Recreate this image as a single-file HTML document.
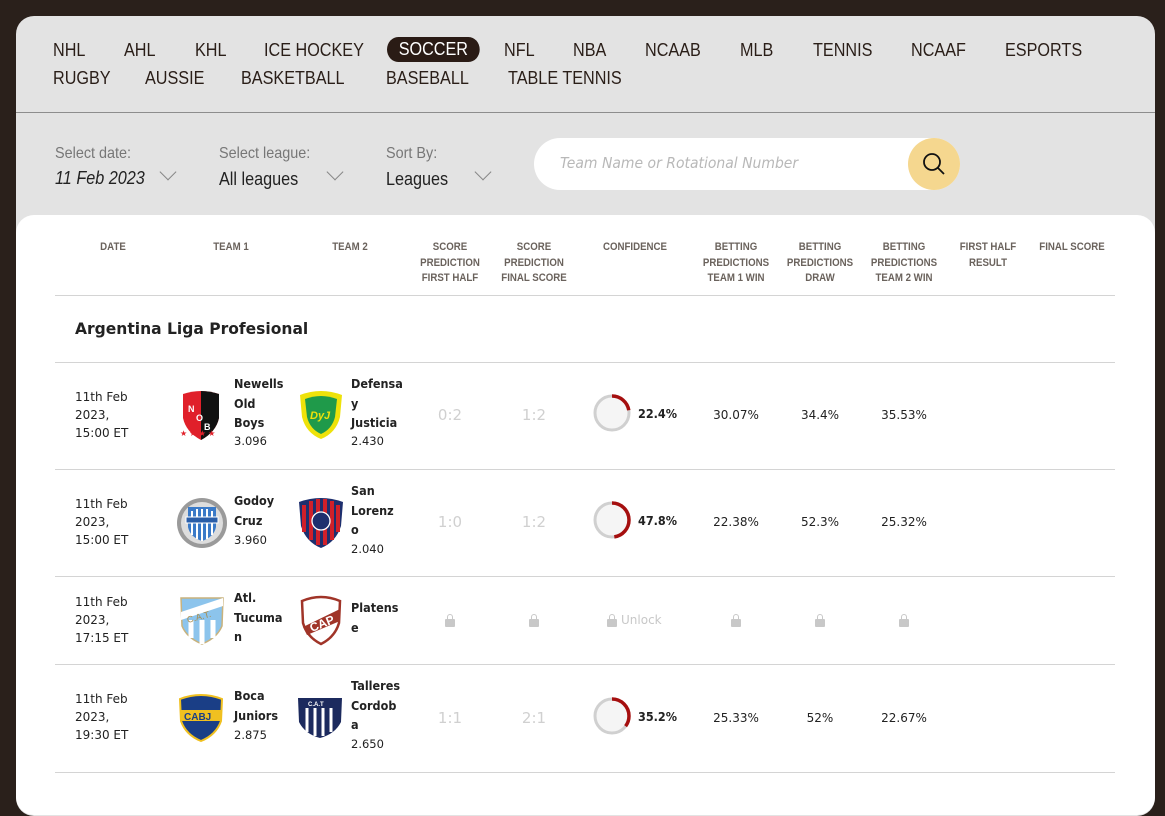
<!DOCTYPE html>
<html><head><meta charset="utf-8"><style>
*{margin:0;padding:0;box-sizing:border-box}
body{width:1165px;height:777px;overflow:hidden;background:#2a201b;font-family:"Liberation Sans",sans-serif;position:relative}
.panel{position:absolute;left:16px;top:16px;width:1139px;height:800px;background:#e3e3e3;border-radius:18px}
.nav{position:absolute;font-size:18px;color:#2a1e18;font-family:"Liberation Sans",sans-serif}
.nav span{position:absolute;white-space:nowrap;top:0;transform:scaleX(0.9);transform-origin:left center}
.sel{background:#2a1b15;color:#fff;border-radius:14px;padding:2px 13px}
.hr{position:absolute;left:16px;top:112px;width:1139px;height:1px;background:#8d8d8d}
.lbl{position:absolute;font-size:16px;color:#777;transform:scaleX(0.9);transform-origin:left}
.val{position:absolute;font-size:18px;color:#222;transform:scaleX(0.9);transform-origin:left}
.chev{position:absolute;width:12px;height:12px;border-right:1.3px solid #888;border-bottom:1.3px solid #888;transform:rotate(45deg)}
.search{position:absolute;left:534px;top:138px;width:426px;height:52px;background:#fff;border-radius:26px}
.search i{position:absolute;left:26px;top:16px;font-size:15px;color:#b8b8b8;font-family:"DejaVu Sans",sans-serif;font-style:italic;transform:scaleX(0.93);transform-origin:left}
.sbtn{position:absolute;left:908px;top:138px;width:52px;height:52px;border-radius:50%;background:#f5d78f}
.card{position:absolute;left:16px;top:215px;width:1139px;height:600px;background:#fff;border-radius:18px}
.th{position:absolute;top:240px;font-size:11px;font-weight:bold;color:#6a625c;text-align:center;line-height:15.5px;transform:translateX(-50%) scaleX(0.88);white-space:nowrap}
.line{position:absolute;left:55px;width:1060px;height:1px;background:#d4d4d4}
.lg{position:absolute;left:75px;top:319px;font-size:16px;font-weight:bold;color:#222;font-family:"DejaVu Sans",sans-serif;transform:scaleX(0.97);transform-origin:left}
.t{position:absolute;font-family:"DejaVu Sans",sans-serif;font-size:12px;color:#222}
.d{line-height:18px}
.n{font-weight:bold;line-height:19.5px;font-size:12.5px;transform:scaleX(0.9);transform-origin:left top}
.o{font-size:11.5px}
.sc{position:absolute;font-family:"DejaVu Sans",sans-serif;font-size:15px;color:#d0d0d0;transform:translateX(-50%)}
.p{position:absolute;font-family:"DejaVu Sans",sans-serif;font-size:12px;color:#222;transform:translateX(-50%)}
.cp{position:absolute;font-family:"DejaVu Sans",sans-serif;font-size:12.5px;font-weight:bold;color:#222;transform:scaleX(0.9);transform-origin:left}
svg{position:absolute}
.lock{position:absolute;width:10px;height:8px;background:#c8c8c8;border-radius:1px}
.lock:before{content:"";position:absolute;left:2px;top:-5px;width:4px;height:5px;border:1.5px solid #c8c8c8;border-bottom:none;border-radius:4px 4px 0 0}
</style></head><body>
<div class="panel"></div>
<div class="nav" style="left:0;top:40px">
<span style="left:53px">NHL</span><span style="left:124px">AHL</span><span style="left:195px">KHL</span><span style="left:264px">ICE HOCKEY</span><span class="sel" style="left:387px;top:-3px">SOCCER</span><span style="left:504px">NFL</span><span style="left:573px">NBA</span><span style="left:645px">NCAAB</span><span style="left:740px">MLB</span><span style="left:813px">TENNIS</span><span style="left:911px">NCAAF</span><span style="left:1005px">ESPORTS</span>
</div>
<div class="nav" style="left:0;top:68px">
<span style="left:53px">RUGBY</span><span style="left:145px">AUSSIE</span><span style="left:241px">BASKETBALL</span><span style="left:386px">BASEBALL</span><span style="left:508px">TABLE TENNIS</span>
</div>
<div class="hr"></div>
<div class="lbl" style="left:55px;top:145px">Select date:</div>
<div class="val" style="left:55px;top:168px;font-style:italic">11 Feb 2023</div>
<div class="chev" style="left:162px;top:166px"></div>
<div class="lbl" style="left:219px;top:145px">Select league:</div>
<div class="val" style="left:219px;top:169px">All leagues</div>
<div class="chev" style="left:329px;top:166px"></div>
<div class="lbl" style="left:386px;top:145px">Sort By:</div>
<div class="val" style="left:386px;top:169px">Leagues</div>
<div class="chev" style="left:477px;top:166px"></div>
<div class="search"><i>Team Name or Rotational Number</i></div>
<div class="sbtn"><svg width="52" height="52" style="left:0;top:0"><circle cx="24" cy="24" r="8" fill="none" stroke="#111" stroke-width="1.8"/><line x1="30" y1="30" x2="36" y2="36" stroke="#111" stroke-width="1.8"/></svg></div>
<div class="card"></div>
<div class="th" style="left:113px">DATE</div>
<div class="th" style="left:231px">TEAM 1</div>
<div class="th" style="left:350px">TEAM 2</div>
<div class="th" style="left:450px">SCORE<br>PREDICTION<br>FIRST HALF</div>
<div class="th" style="left:534px">SCORE<br>PREDICTION<br>FINAL SCORE</div>
<div class="th" style="left:635px">CONFIDENCE</div>
<div class="th" style="left:736px">BETTING<br>PREDICTIONS<br>TEAM 1 WIN</div>
<div class="th" style="left:820px">BETTING<br>PREDICTIONS<br>DRAW</div>
<div class="th" style="left:904px">BETTING<br>PREDICTIONS<br>TEAM 2 WIN</div>
<div class="th" style="left:988px">FIRST HALF<br>RESULT</div>
<div class="th" style="left:1072px">FINAL SCORE</div>
<div class="line" style="top:295px"></div>
<div class="lg">Argentina Liga Profesional</div>
<div class="line" style="top:362px"></div>
<div class="line" style="top:469px"></div>
<div class="line" style="top:576px"></div>
<div class="line" style="top:664px"></div>
<div class="line" style="top:772px"></div>

<!-- Row 1 -->
<div class="t d" style="left:75px;top:388px">11th Feb<br>2023,<br>15:00 ET</div>
<svg width="46" height="56" style="left:178px;top:390px"><path d="M5 4 Q23 -2 41 4 L41 28 Q38 42 23 50 Q8 42 5 28Z" fill="#e0202a"/><path d="M23 1 Q32 1 41 4 L41 28 Q38 42 23 50Z" fill="#111"/><text x="10" y="22" font-size="9" fill="#fff" font-weight="bold">N</text><text x="18" y="31" font-size="9" fill="#fff" font-weight="bold">O</text><text x="26" y="40" font-size="9" fill="#fff" font-weight="bold">B</text><text x="2" y="46" font-size="8" fill="#e0202a">★ ★ ★ ★</text></svg>
<div class="t n" style="left:234px;top:374px">Newells<br>Old<br>Boys</div>
<div class="t o" style="left:234px;top:434px">3.096</div>
<svg width="50" height="52" style="left:296px;top:389px"><path d="M4 6 Q25 -2 46 6 L44 28 Q40 44 25 50 Q10 44 6 28Z" fill="#eee20a"/><path d="M9 10 Q25 4 41 10 L39 28 Q36 40 25 45 Q14 40 11 28Z" fill="#1f9a4a"/><text x="14" y="30" font-size="11" fill="#eee20a" font-weight="bold" font-style="italic">DyJ</text></svg>
<div class="t n" style="left:351px;top:374px">Defensa<br>y<br>Justicia</div>
<div class="t o" style="left:351px;top:434px">2.430</div>
<div class="sc" style="left:450px;top:406px">0:2</div>
<div class="sc" style="left:534px;top:406px">1:2</div>
<svg width="40" height="40" style="left:593px;top:394px"><circle cx="19" cy="19" r="17" fill="#f5f5f5" stroke="#d0d0d0" stroke-width="3"/><circle cx="19" cy="19" r="17" fill="none" stroke="#a50f0f" stroke-width="3.5" stroke-dasharray="23.9 200" transform="rotate(-90 19 19)"/></svg>
<div class="cp" style="left:638px;top:406px">22.4%</div>
<div class="p" style="left:736px;top:408px">30.07%</div>
<div class="p" style="left:820px;top:408px">34.4%</div>
<div class="p" style="left:904px;top:408px">35.53%</div>

<!-- Row 2 -->
<div class="t d" style="left:75px;top:495px">11th Feb<br>2023,<br>15:00 ET</div>
<svg width="52" height="52" style="left:176px;top:497px"><circle cx="26" cy="26" r="25" fill="#9a9a9a"/><circle cx="26" cy="26" r="21" fill="#ddd"/><path d="M12 10 L40 10 L40 30 Q38 40 26 44 Q14 40 12 30Z" fill="#3a7ac8"/><path d="M16 14 V38 M21 12 V42 M26 12 V44 M31 12 V42 M36 14 V38" stroke="#fff" stroke-width="2"/><rect x="10" y="20" width="32" height="6" fill="#2a5ea8" stroke="#fff"/></svg>
<div class="t n" style="left:234px;top:491px">Godoy<br>Cruz</div>
<div class="t o" style="left:234px;top:533px">3.960</div>
<svg width="50" height="54" style="left:296px;top:496px"><path d="M3 6 Q25 -2 47 6 L45 30 Q40 46 25 52 Q10 46 5 30Z" fill="#1e2f6e"/><path d="M8 9 V36 M15 5 V44 M22 3 V49 M29 3 V49 M36 5 V44 M42 9 V36" stroke="#d0202a" stroke-width="4"/><circle cx="25" cy="25" r="9" fill="#1e2f6e" stroke="#fff" stroke-width="1.3"/></svg>
<div class="t n" style="left:351px;top:481px">San<br>Lorenz<br>o</div>
<div class="t o" style="left:351px;top:542px">2.040</div>
<div class="sc" style="left:450px;top:513px">1:0</div>
<div class="sc" style="left:534px;top:513px">1:2</div>
<svg width="40" height="40" style="left:593px;top:501px"><circle cx="19" cy="19" r="17" fill="#f5f5f5" stroke="#d0d0d0" stroke-width="3"/><circle cx="19" cy="19" r="17" fill="none" stroke="#a50f0f" stroke-width="3.5" stroke-dasharray="51 200" transform="rotate(-90 19 19)"/></svg>
<div class="cp" style="left:638px;top:513px">47.8%</div>
<div class="p" style="left:736px;top:515px">22.38%</div>
<div class="p" style="left:820px;top:515px">52.3%</div>
<div class="p" style="left:904px;top:515px">25.32%</div>

<!-- Row 3 -->
<div class="t d" style="left:75px;top:593px">11th Feb<br>2023,<br>17:15 ET</div>
<svg width="46" height="54" style="left:179px;top:594px"><path d="M2 4 L44 4 L43 32 Q38 44 23 50 Q8 44 3 32Z" fill="#8cc4ec" stroke="#c9b27c" stroke-width="1.5"/><path d="M12 26 V44 M23 26 V50 M34 26 V44" stroke="#fff" stroke-width="5"/><path d="M2 26 L44 12 L44 4 L2 18Z" fill="#fff"/><text x="7" y="25" font-size="9" fill="#a88c4c" transform="rotate(-15 23 20)">C.A.T.</text></svg>
<div class="t n" style="left:234px;top:588px">Atl.<br>Tucuma<br>n</div>
<svg width="44" height="52" style="left:299px;top:595px"><path d="M3 6 Q22 -2 41 6 L40 28 Q36 42 22 49 Q8 42 4 28Z" fill="#fff" stroke="#a03428" stroke-width="2.5"/><path d="M4 32 L41 14 L41 26 L8 40Z" fill="#a03428"/><text x="10" y="33" font-size="12" fill="#fff" font-weight="bold" transform="rotate(-22 22 28)">CAP</text></svg>
<div class="t n" style="left:351px;top:598px">Platens<br>e</div>
<div class="lock" style="left:445px;top:619px"></div>
<div class="lock" style="left:529px;top:619px"></div>
<div class="lock" style="left:607px;top:619px"></div>
<div style="position:absolute;left:621px;top:613px;font-family:'DejaVu Sans',sans-serif;font-size:12px;color:#c8c8c8">Unlock</div>
<div class="lock" style="left:731px;top:619px"></div>
<div class="lock" style="left:815px;top:619px"></div>
<div class="lock" style="left:899px;top:619px"></div>

<!-- Row 4 -->
<div class="t d" style="left:75px;top:690px">11th Feb<br>2023,<br>19:30 ET</div>
<svg width="46" height="50" style="left:178px;top:693px"><path d="M2 6 Q23 -2 44 6 L43 28 Q38 42 23 48 Q8 42 3 28Z" fill="#1a3e86" stroke="#f0c020" stroke-width="2"/><rect x="3" y="17" width="40" height="11" fill="#f0c020"/><text x="6" y="27" font-size="10" fill="#1a3e86" font-weight="bold">CABJ</text></svg>
<div class="t n" style="left:234px;top:686px">Boca<br>Juniors</div>
<div class="t o" style="left:234px;top:728px">2.875</div>
<svg width="50" height="46" style="left:295px;top:694px"><path d="M3 4 L47 4 L46 28 Q40 40 25 44 Q10 40 4 28Z" fill="#1c2a5e"/><path d="M12 14 V38 M20 14 V42 M28 14 V42 M36 14 V38" stroke="#fff" stroke-width="3"/><text x="13" y="12" font-size="6" fill="#fff" font-weight="bold">C.A.T</text></svg>
<div class="t n" style="left:351px;top:676px">Talleres<br>Cordob<br>a</div>
<div class="t o" style="left:351px;top:737px">2.650</div>
<div class="sc" style="left:450px;top:709px">1:1</div>
<div class="sc" style="left:534px;top:709px">2:1</div>
<svg width="40" height="40" style="left:593px;top:697px"><circle cx="19" cy="19" r="17" fill="#f5f5f5" stroke="#d0d0d0" stroke-width="3"/><circle cx="19" cy="19" r="17" fill="none" stroke="#a50f0f" stroke-width="3.5" stroke-dasharray="37.6 200" transform="rotate(-90 19 19)"/></svg>
<div class="cp" style="left:638px;top:709px">35.2%</div>
<div class="p" style="left:736px;top:711px">25.33%</div>
<div class="p" style="left:820px;top:711px">52%</div>
<div class="p" style="left:904px;top:711px">22.67%</div>
</body></html>
